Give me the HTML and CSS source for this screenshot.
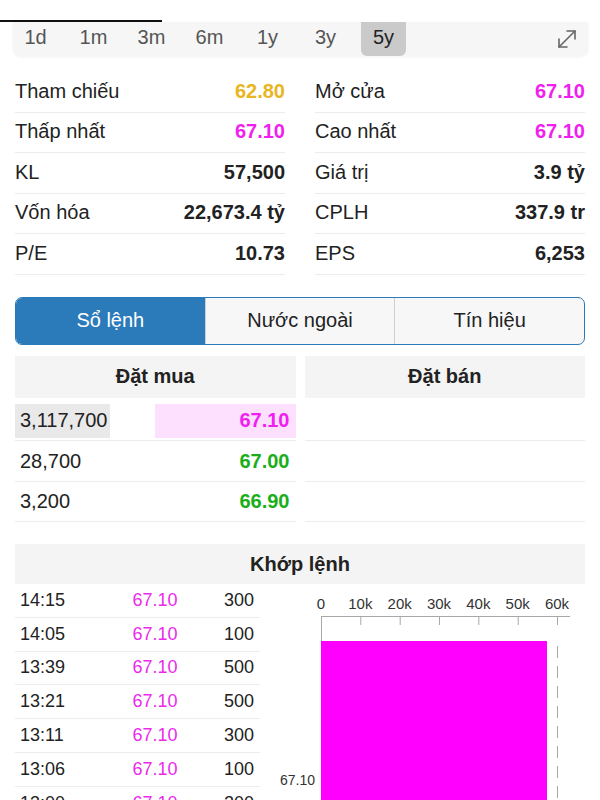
FILE: index.html
```html
<!DOCTYPE html>
<html lang="vi">
<head>
<meta charset="utf-8">
<title>Stock</title>
<link rel="stylesheet" href="styles.css">
</head>
<body>
<div class="indicator"></div>
<div class="periods">
  <span class="p">1d</span>
  <span class="p">1m</span>
  <span class="p">3m</span>
  <span class="p">6m</span>
  <span class="p">1y</span>
  <span class="p">3y</span>
  <span class="p active">5y</span>
  <svg class="expand" width="22" height="22" viewBox="0 0 22 22" fill="none" stroke="#666" stroke-width="1.6" stroke-linecap="round" stroke-linejoin="round">
    <path d="M3 19 L19 3"/>
    <path d="M11 3 H19 V11"/>
    <path d="M3 11 V19 H11"/>
  </svg>
</div>

<div class="stats">
  <div class="col">
    <div class="row"><span>Tham chiếu</span><b class="yellow">62.80</b></div>
    <div class="row"><span>Thấp nhất</span><b class="pink">67.10</b></div>
    <div class="row"><span>KL</span><b>57,500</b></div>
    <div class="row"><span>Vốn hóa</span><b>22,673.4 tỷ</b></div>
    <div class="row"><span>P/E</span><b>10.73</b></div>
  </div>
  <div class="col">
    <div class="row"><span>Mở cửa</span><b class="pink">67.10</b></div>
    <div class="row"><span>Cao nhất</span><b class="pink">67.10</b></div>
    <div class="row"><span>Giá trị</span><b>3.9 tỷ</b></div>
    <div class="row"><span>CPLH</span><b>337.9 tr</b></div>
    <div class="row"><span>EPS</span><b>6,253</b></div>
  </div>
</div>

<div class="tabs">
  <div class="tab active">Sổ lệnh</div>
  <div class="tab">Nước ngoài</div>
  <div class="tab">Tín hiệu</div>
</div>

<div class="book">
  <div class="side">
    <div class="bhead">Đặt mua</div>
    <div class="brow"><span class="vol hl">3,117,700</span><span class="price pink pinkbg">67.10</span></div>
    <div class="brow"><span class="vol">28,700</span><span class="price green">67.00</span></div>
    <div class="brow"><span class="vol">3,200</span><span class="price green">66.90</span></div>
  </div>
  <div class="side">
    <div class="bhead">Đặt bán</div>
    <div class="brow"></div>
    <div class="brow"></div>
    <div class="brow"></div>
  </div>
</div>

<div class="match">
  <div class="mhead">Khớp lệnh</div>
  <div class="mbody">
    <div class="trades">
      <div class="trow"><span>14:15</span><span class="tp">67.10</span><span class="tv">300</span></div>
      <div class="trow"><span>14:05</span><span class="tp">67.10</span><span class="tv">100</span></div>
      <div class="trow"><span>13:39</span><span class="tp">67.10</span><span class="tv">500</span></div>
      <div class="trow"><span>13:21</span><span class="tp">67.10</span><span class="tv">500</span></div>
      <div class="trow"><span>13:11</span><span class="tp">67.10</span><span class="tv">300</span></div>
      <div class="trow"><span>13:06</span><span class="tp">67.10</span><span class="tv">100</span></div>
      <div class="trow"><span>13:00</span><span class="tp">67.10</span><span class="tv">200</span></div>
    </div>
    <svg class="chart" width="325" height="230" viewBox="0 0 325 230">
      <g class="ticklabels" font-size="15" fill="#333" text-anchor="middle">
        <text x="61" y="25">0</text>
        <text x="100.3" y="25">10k</text>
        <text x="139.7" y="25">20k</text>
        <text x="179" y="25">30k</text>
        <text x="218.3" y="25">40k</text>
        <text x="257.7" y="25">50k</text>
        <text x="297" y="25">60k</text>
      </g>
      <g stroke="#a8a8a8" stroke-width="1">
        <line x1="61" y1="32.5" x2="310" y2="32.5"/>
        <line x1="61.5" y1="32" x2="61.5" y2="57"/>
        <line x1="100.8" y1="32" x2="100.8" y2="41"/>
        <line x1="140.2" y1="32" x2="140.2" y2="41"/>
        <line x1="179.5" y1="32" x2="179.5" y2="41"/>
        <line x1="218.8" y1="32" x2="218.8" y2="41"/>
        <line x1="258.2" y1="32" x2="258.2" y2="41"/>
        <line x1="297.5" y1="32" x2="297.5" y2="41"/>
        <line x1="297.5" y1="62" x2="297.5" y2="230" stroke-dasharray="12 8"/>
      </g>
      <rect x="61" y="57" width="226" height="180" fill="#ff00ff"/>
      <text x="55" y="201" font-size="14" fill="#333" text-anchor="end">67.10</text>
    </svg>
  </div>
</div>
</body>
</html>
```

FILE: styles.css
```css
* { box-sizing: border-box; }
html, body { margin: 0; padding: 0; background: #fff; }
body {
  width: 600px;
  height: 800px;
  overflow: hidden;
  font-family: "Liberation Sans", Arial, sans-serif;
  color: #222;
}

.indicator {
  margin-top: 20px;
  width: 162px;
  height: 2px;
  background: #111;
}

.periods {
  margin: 0 12px 0 13px;
  height: 34px;
  background: #f6f6f6;
  border-radius: 0 0 8px 8px;
  box-shadow: 0 1px 3px rgba(0,0,0,0.06);
  display: flex;
  align-items: stretch;
  gap: 13px;
  position: relative;
}
.p {
  width: 45px;
  display: flex;
  align-items: center;
  justify-content: center;
  font-size: 20px;
  color: #555;
  padding-bottom: 4px;
  border-radius: 0 0 6px 6px;
}
.p.active {
  background: #cacaca;
  color: #222;
}
.expand {
  margin-left: auto;
  margin-right: 10px;
  align-self: center;
}

.stats {
  margin: 16px 15px 0 15px;
  display: flex;
  gap: 30px;
}
.col { flex: 1; }
.row {
  height: 40.5px;
  border-bottom: 1px solid #ececec;
  display: flex;
  align-items: center;
  justify-content: space-between;
  font-size: 20px;
  padding-bottom: 1px;
}
.row b { font-weight: bold; color: #222; }
.row b.yellow { color: #e8b622; }
.row b.pink { color: #f01ef0; }

.tabs {
  margin: 22px 15px 0 15px;
  height: 48px;
  border: 1.5px solid #2b7bba;
  border-radius: 7px;
  overflow: hidden;
  display: flex;
  background: #f7f7f8;
}
.tab {
  flex: 1;
  display: flex;
  align-items: center;
  justify-content: center;
  font-size: 20px;
  color: #222;
  border-left: 1px solid #cfcfcf;
}
.tab:first-child { border-left: none; }
.tab.active {
  background: #2b7bba;
  color: #fff;
}

.book {
  margin: 11px 15px 0 15px;
  display: flex;
  gap: 9px;
}
.side { flex: 1; }
.bhead {
  height: 42px;
  background: #f4f4f4;
  display: flex;
  align-items: center;
  justify-content: center;
  font-size: 20px;
  font-weight: bold;
  margin-bottom: 3px;
}
.brow {
  height: 40.5px;
  border-bottom: 1px solid #ececec;
  display: flex;
  align-items: center;
  justify-content: space-between;
  font-size: 20px;
  padding-top: 1px;
}
.vol {
  height: 34px;
  display: flex;
  align-items: center;
  padding: 0 5px;
}
.vol.hl { background: #e9e9e9; width: 95px; }
.price {
  height: 34px;
  display: flex;
  align-items: center;
  justify-content: flex-end;
  padding-right: 6px;
  font-weight: bold;
}
.price.pinkbg { background: #fde0fd; width: 141px; }
.pink { color: #f01ef0; }
.green { color: #1aae1a; }

.match { margin: 22px 15px 0 15px; }
.mhead {
  height: 40px;
  background: #f4f4f4;
  display: flex;
  align-items: center;
  justify-content: center;
  font-size: 20px;
  font-weight: bold;
}
.mbody {
  display: flex;
  align-items: flex-start;
}
.trades { width: 245px; flex: none; }
.trow {
  height: 33.8px;
  border-bottom: 1px solid #ececec;
  display: grid;
  grid-template-columns: 100px 70px 1fr;
  align-items: center;
  font-size: 18px;
  padding: 0 6px 0 5px;
  color: #222;
}
.tp { color: #ec2aec; text-align: center; }
.tv { text-align: right; }
.chart {
  flex: none;
  display: block;
  font-family: "Liberation Sans", Arial, sans-serif;
}
```
